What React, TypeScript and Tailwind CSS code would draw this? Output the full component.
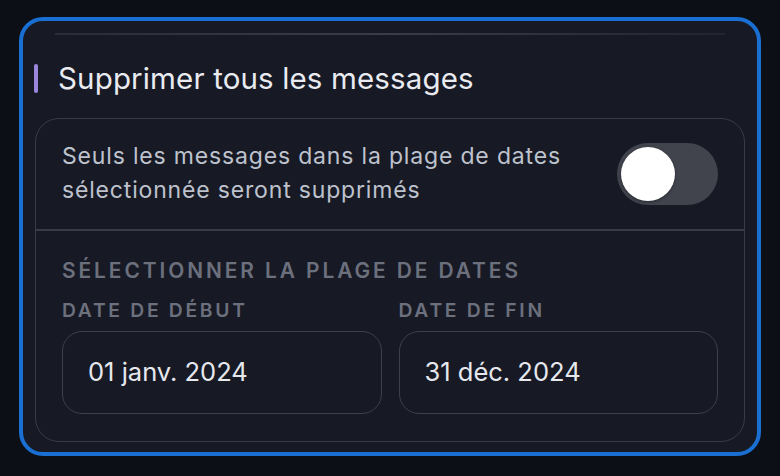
import React from "react";

export default function App() {
  const font = { fontFamily: "Inter, 'Noto Sans', sans-serif" };
  return (
    <div className="w-[780px] h-[476px] bg-[#0d0f16] overflow-hidden" style={font}>
      <div className="ml-[19px] mt-[17px] w-[742px] h-[439px] rounded-[24px] border-[4px] border-[#1a6fd2] bg-[#171a25] px-[12px] pt-[12px] flex flex-col">
        <div className="h-[2px] mx-[20px] bg-gradient-to-r from-[#2a2d38] via-[#3a3d48] to-[#22252f]" />
        <div className="flex items-center mt-[27px] h-[32px]">
          <div className="w-[4px] h-[29px] rounded-full bg-[#9b86dd] ml-[-1px]" />
          <div className="ml-[20px] text-[29.5px] leading-[32px] text-[#e9ebf1] tracking-[0.005em]">
            Supprimer tous les messages
          </div>
        </div>
        <div className="mt-[24px] h-[324px] rounded-[24px] border-[1.5px] border-[#393c48] flex flex-col">
          <div className="h-[110px] flex items-center justify-between px-[26px]">
            <div className="text-[23px] leading-[34px] text-[#bec2cd] tracking-[0.036em] mt-[-3px]">
              Seuls les messages dans la plage de dates
              <br />
              sélectionnée seront supprimés
            </div>
            <div className="w-[101px] h-[62px] rounded-full bg-[#41434d] flex items-center px-[4px]">
              <div className="w-[54px] h-[54px] rounded-full bg-white shadow-[0_1px_3px_rgba(0,0,0,0.4)]" />
            </div>
          </div>
          <div className="h-[1.5px] bg-[#393c48]" />
          <div className="px-[26px] pt-[29px]">
            <div className="text-[20.9px] leading-[22px] tracking-[0.14em] font-semibold text-[#6c707d]">
              SÉLECTIONNER LA PLAGE DE DATES
            </div>
            <div className="grid grid-cols-2 gap-[17px] mt-[17px]">
              <div>
                <div className="text-[19.3px] leading-[22px] tracking-[0.14em] font-semibold text-[#6c707d]">
                  DATE DE DÉBUT
                </div>
                <div className="mt-[10px] h-[83px] rounded-[20px] border-[1.5px] border-[#3d404b] flex items-center pl-[25px] text-[25.5px] text-[#e6e8ee]">
                  01 janv. 2024
                </div>
              </div>
              <div>
                <div className="text-[19.3px] leading-[22px] tracking-[0.14em] font-semibold text-[#6c707d]">
                  DATE DE FIN
                </div>
                <div className="mt-[10px] h-[83px] rounded-[20px] border-[1.5px] border-[#3d404b] flex items-center pl-[25px] text-[25.5px] text-[#e6e8ee]">
                  31 déc. 2024
                </div>
              </div>
            </div>
          </div>
        </div>
      </div>
    </div>
  );
}
